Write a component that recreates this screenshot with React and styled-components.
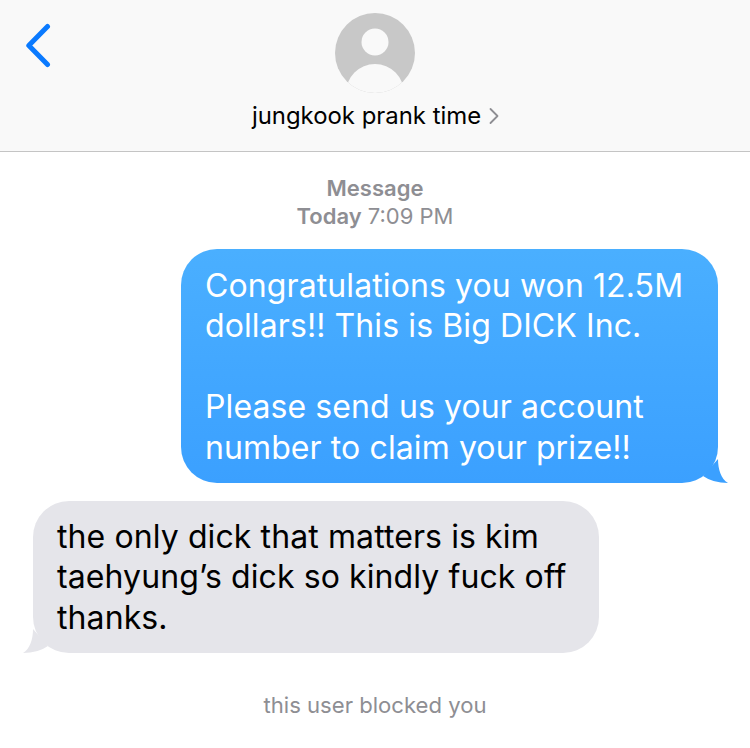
import styled, { createGlobalStyle } from 'styled-components'

const GlobalStyle = createGlobalStyle`
  html, body {
    margin: 0;
    padding: 0;
    background: #ffffff;
  }
  body {
    font-family: Inter, "Liberation Sans", sans-serif;
  }
`

const Page = styled.main`
  width: 750px;
  height: 748px;
  overflow: hidden;
  display: flex;
  flex-direction: column;
`

const Header = styled.header`
  background-color: #f9f9f9;
  border-bottom: 1px solid #c4c4c4;
  display: grid;
  grid-template-columns: 1fr auto 1fr;
  padding-top: 13px;
  height: 138px;
`

const BackButton = styled.div`
  padding: 10px 0 0 25px;
`

const Contact = styled.div`
  display: flex;
  flex-direction: column;
  align-items: center;
  gap: 9px;
`

const Name = styled.div`
  display: flex;
  align-items: center;
  gap: 8px;
  font-size: 23.9px;
  line-height: 28px;
  color: #000;
  margin-left: 1px;
`

const Thread = styled.section`
  display: flex;
  flex-direction: column;
`

const Stamp = styled.div`
  margin-top: 22px;
  text-align: center;
  font-size: 22px;
  line-height: 28px;
  color: #8e8e93;
  font-weight: 400;
  b {
    font-weight: 600;
  }
`

const Bubble = styled.div`
  position: relative;
  box-sizing: border-box;
  width: ${(props) => props.$width}px;
  height: ${(props) => props.$height}px;
  padding: ${(props) => (props.$sent ? '17px' : '16px')} 24px 0;
  border-radius: 36px;
  font-size: 32px;
  line-height: 40.4px;
  letter-spacing: 0.1px;
  white-space: pre-line;
  align-self: ${(props) => (props.$sent ? 'flex-end' : 'flex-start')};
  margin: ${(props) => (props.$sent ? '19px 32px 0 0' : '18px 0 0 33px')};
  color: ${(props) => (props.$sent ? '#ffffff' : '#000000')};
  background: ${(props) => (props.$sent ? 'linear-gradient(#4aafff, #3ba0ff)' : '#e5e5ea')};
`

const Tail = styled.svg`
  position: absolute;
  bottom: 0;
  ${(props) => (props.$sent ? 'right: -10px;' : 'left: -10px;')}
`

const Note = styled.div`
  margin-top: 38px;
  text-align: center;
  font-size: 22.1px;
  line-height: 28px;
  color: #8e8e93;
`

export default function App() {
  return (
    <Page>
      <GlobalStyle />
      <Header>
        <BackButton>
          <svg width="28" height="46" viewBox="0 0 28 46" fill="none">
            <path d="M22.5 3.5 L3.8 22.5 L22.5 41.5" stroke="#0a7aff" strokeWidth="5" strokeLinecap="round" strokeLinejoin="round" />
          </svg>
        </BackButton>
        <Contact>
          <svg width="80" height="80" viewBox="0 0 80 80">
            <defs>
              <clipPath id="avatarClip">
                <circle cx="40" cy="40" r="40" />
              </clipPath>
            </defs>
            <circle cx="40" cy="40" r="40" fill="#c8c8c8" />
            <g clipPath="url(#avatarClip)" fill="#f9f9f9">
              <circle cx="40" cy="29" r="13.5" />
              <circle cx="40" cy="80" r="29" />
            </g>
          </svg>
          <Name>
            jungkook prank time
            <svg width="10" height="18" viewBox="0 0 10 18" fill="none">
              <path d="M1.5 2 L8.5 9 L1.5 16" stroke="#8e8e93" strokeWidth="1.8" strokeLinecap="round" strokeLinejoin="round" />
            </svg>
          </Name>
        </Contact>
      </Header>
      <Thread>
        <Stamp>
          <b>Message</b>
          <br />
          <b>Today</b> 7:09 PM
        </Stamp>
        <Bubble $sent $width={537} $height={234}>
          {'Congratulations you won 12.5M\ndollars!! This is Big DICK Inc.\n\nPlease send us your account\nnumber to claim your prize!!'}
          <Tail $sent width="30" height="24" viewBox="0 0 30 24">
            <path d="M20 0 C20 10 23 20 30 24 Q15 24 5 17 Z" fill="#3ba0ff" />
          </Tail>
        </Bubble>
        <Bubble $width={566} $height={152}>
          {'the only dick that matters is kim\ntaehyung’s dick so kindly fuck off\nthanks.'}
          <Tail width="30" height="24" viewBox="0 0 30 24">
            <path d="M10 0 C10 10 7 20 0 24 Q15 24 25 17 Z" fill="#e5e5ea" />
          </Tail>
        </Bubble>
        <Note>this user blocked you</Note>
      </Thread>
    </Page>
  )
}
